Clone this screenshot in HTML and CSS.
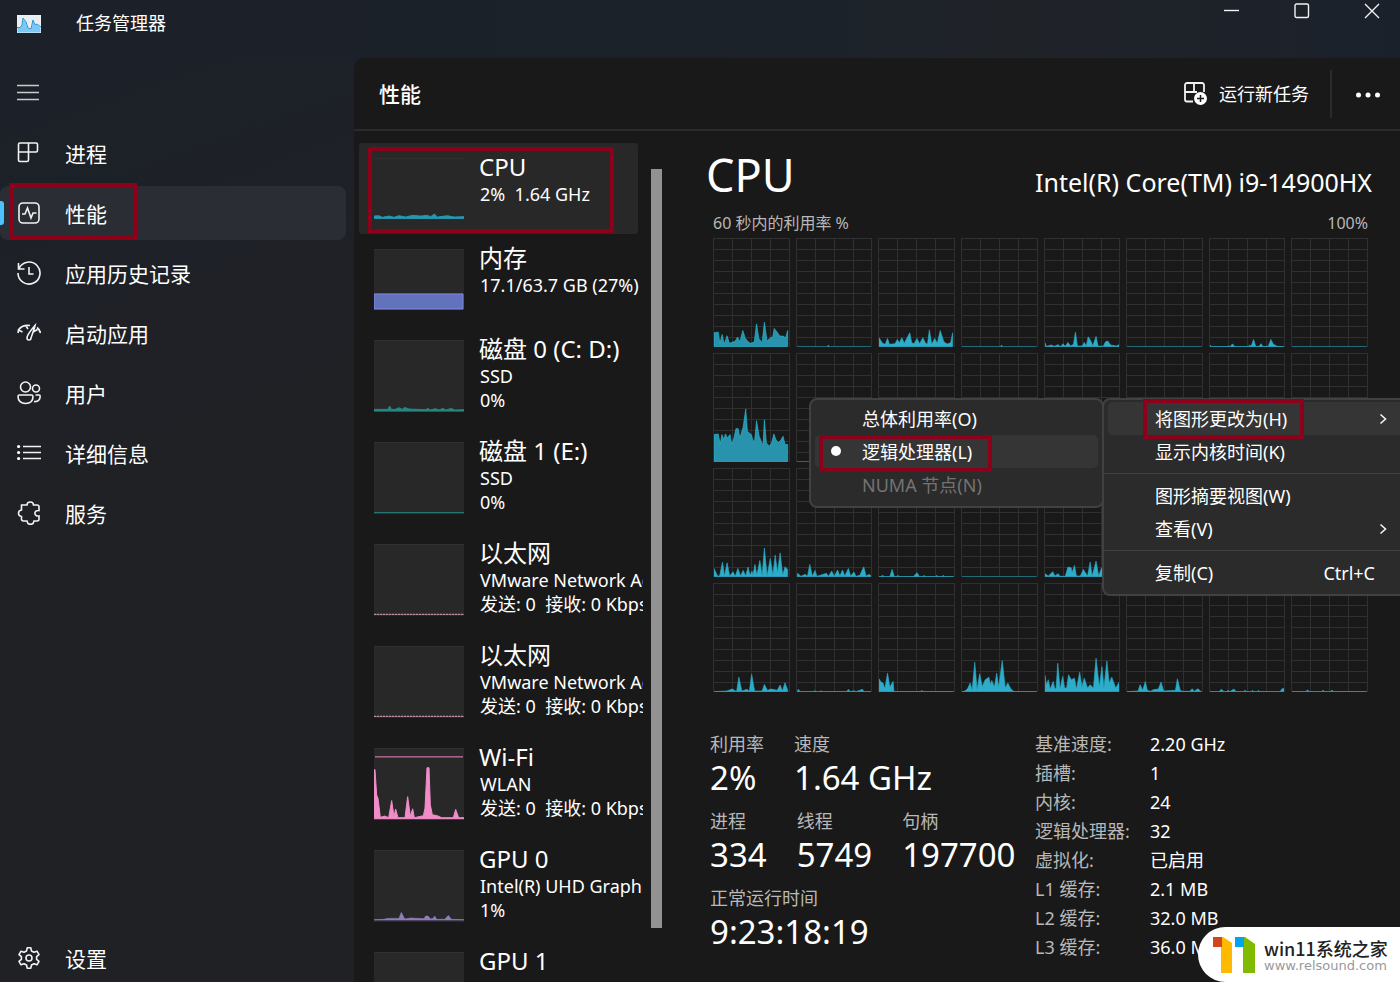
FILE: index.html
```html
<!DOCTYPE html>
<html lang="zh-CN">
<head>
<meta charset="utf-8">
<meta name="viewport" content="width=device-width, initial-scale=1">
<title>任务管理器</title>
<link rel="stylesheet" href="styles.css">
</head>
<body>
<div class="app">
  <header class="titlebar">
    <svg class="logo" width="24" height="18" viewBox="0 0 24 18"><rect width="24" height="18" fill="#e9eef3"/><path d="M0 12 3 12 5 10 6 3 9 7 11 13 14 14 16 5 18 10 20 9 24 12V18H0Z" fill="#7cc8f4"/><path d="M0 12.500H3L5 10 6 3 9 7 11 13 14 14 16 5 18 10 20 9 24 12" fill="none" stroke="#2492d8"/></svg>
    <h1 class="app-name">任务管理器</h1>
    <div class="window-buttons">
      <button aria-label="最小化"><svg width="16" height="16" viewBox="0 0 16 16"><path d="M0 7.500H15"/></svg></button>
      <button aria-label="最大化"><svg width="16" height="16" viewBox="0 0 16 16"><rect x="1" y="1" width="13.500" height="13.500" rx="1.500"/></svg></button>
      <button aria-label="关闭"><svg width="16" height="16" viewBox="0 0 16 16"><path d="M1 1 15 15M15 1 1 15"/></svg></button>
    </div>
  </header>

  <nav class="sidebar">
    <button class="hamburger" aria-label="导航"><svg width="24" height="24" viewBox="0 0 24 24"><path d="M0 5.500H22M0 12.500H22M0 19.500H22"/></svg></button>
    <a class="nav-item" href="#processes"><svg width="24" height="24" viewBox="0 0 24 24"><path d="M3 2H19a1.500 1.500 0 0 1 1.500 1.500V9.500a1.500 1.500 0 0 1-1.500 1.500H11.500V19a1.500 1.500 0 0 1-1.500 1.500H3A1.500 1.500 0 0 1 1.500 19V3.500A1.500 1.500 0 0 1 3 2ZM11.500 2V11H1.500"/></svg><span>进程</span></a>
    <a class="nav-item active" href="#performance" aria-current="page"><svg width="24" height="24" viewBox="0 0 24 24"><rect x="2" y="2" width="20" height="20" rx="4"/><path d="M5 13H8L10.500 7 14 17 16 12H19.500"/></svg><span>性能</span><i class="mark mark-nav"></i></a>
    <a class="nav-item" href="#history"><svg width="24" height="24" viewBox="0 0 24 24"><path d="M1.500 2V8H7.500M2 7.500A11 11 0 1 1 1 12M12 6V13H16.500"/></svg><span>应用历史记录</span></a>
    <a class="nav-item" href="#startup"><svg width="24" height="24" viewBox="0 0 24 24"><path d="M1 12 1.500 9 5.500 11M1.500 9C4 5 8 4 13 4.500M9 5 11 8M18 4.500C14 9 10 14 10 17a2 2 0 0 0 4 0C15 14 17 9 18 4.500ZM16 11 20.500 8.500M20 6.500C22 8 23 10 23.500 12"/></svg><span>启动应用</span></a>
    <a class="nav-item" href="#users"><svg width="24" height="24" viewBox="0 0 24 24"><circle cx="8.500" cy="6" r="5"/><circle cx="19" cy="7.500" r="3.500"/><path d="M2.500 14H14.500A1.500 1.500 0 0 1 16 15.500C16 20 13 22.500 8.500 22.500S1 20 1 15.500A1.500 1.500 0 0 1 2.500 14ZM18.500 14H22A1.300 1.300 0 0 1 23.200 15.300C23.200 19 21 21 17 20.500"/></svg><span>用户</span></a>
    <a class="nav-item" href="#details"><svg width="24" height="24" viewBox="0 0 24 24"><path d="M6 5.500H24M6 11.500H24M6 17.500H24"/><g class="solid"><circle cx="1.600" cy="5.500" r="1.600"/><circle cx="1.600" cy="11.500" r="1.600"/><circle cx="1.600" cy="17.500" r="1.600"/></g></svg><span>详细信息</span></a>
    <a class="nav-item" href="#services"><svg width="24" height="24" viewBox="0 0 24 24"><path d="M5 4H10C10 0 16.500 0 16.500 4H20A2 2 0 0 1 22 6V9.500C16.500 9 16.500 15.500 22 15V18A2 2 0 0 1 20 20H17C16.500 24.500 10.500 24.500 10 20H6.500A2 2 0 0 1 4.500 18V15.500C.500 15 .500 9.500 4.500 9V4Z"/></svg><span>服务</span></a>
    <a class="nav-item settings" href="#settings"><svg width="24" height="24" viewBox="0 0 24 24"><circle cx="12" cy="12" r="3"/><path d="M10.200 1.800H13.800L14.500 5 17 6.300 20 5.200 22 8.600 19.600 10.700V13.300L22 15.400 20 18.800 17 17.700 14.500 19 13.800 22.200H10.200L9.500 19 7 17.700 4 18.800 2 15.400 4.400 13.300V10.700L2 8.600 4 5.200 7 6.300 9.500 5Z" stroke-linejoin="round"/></svg><span>设置</span></a>
  </nav>

  <main class="main">
    <header class="page-header">
      <h2>性能</h2>
      <button class="run-task"><svg width="26" height="26" viewBox="0 0 26 26"><path d="M21 11V4A2 2 0 0 0 19 2H4A2 2 0 0 0 2 4V18.500A2 2 0 0 0 4 20.500H10M11 2V11M2 11H14"/><circle class="solid" cx="17.500" cy="17.500" r="6.500"/><path class="plus" d="M17.500 14V21M14 17.500H21"/></svg>运行新任务</button>
      <button class="more" aria-label="更多"><svg width="24" height="24" viewBox="0 0 24 24"><g class="solid"><circle cx="2.500" cy="13" r="2.500"/><circle cx="12" cy="13" r="2.500"/><circle cx="21.500" cy="13" r="2.500"/></g></svg></button>
    </header>

    <div class="content">
      <section class="devices" aria-label="设备">
        <div class="device-list">
          <a class="device short selected" href="#cpu">
            <svg class="thumb cpu" viewBox="0 0 270 183" preserveAspectRatio="none"><path d="M0 182V174L15 173 25 178 45 174 60 178 75 173 95 177 115 172 140 174 160 172 170 176 181 168 190 177 220 173 240 177 270 176V182Z"/></svg>
            <span class="device-text"><strong>CPU</strong><span>2%&nbsp; 1.64 GHz</span></span>
            <i class="mark mark-device"></i>
          </a>
          <a class="device short" href="#memory">
            <svg class="thumb memory" viewBox="0 0 270 183" preserveAspectRatio="none"><path d="M0 180V134H267V180Z"/></svg>
            <span class="device-text"><strong>内存</strong><span>17.1/63.7 GB (27%)</span></span>
          </a>
          <a class="device" href="#disk0">
            <svg class="thumb disk" viewBox="0 0 270 216" preserveAspectRatio="none"><path d="M0 213V208H42L47 198 52 208 64 208 75 203 85 208 92 202 105 207 155 209 162 205 168 210 185 206 195 210 207 205 215 210 232 205 242 210 270 209V213Z"/></svg>
            <span class="device-text"><strong>磁盘 0 (C: D:)</strong><span>SSD</span><span>0%</span></span>
          </a>
          <a class="device" href="#disk1">
            <svg class="thumb disk" viewBox="0 0 270 216" preserveAspectRatio="none"><path d="M0 212H270"/></svg>
            <span class="device-text"><strong>磁盘 1 (E:)</strong><span>SSD</span><span>0%</span></span>
          </a>
          <a class="device" href="#eth0">
            <svg class="thumb net" viewBox="0 0 270 216" preserveAspectRatio="none"><path class="faint" d="M0 211H270"/><path class="dashes" d="M0 211H270"/></svg>
            <span class="device-text"><strong>以太网</strong><span>VMware Network Adapter</span><span>发送: 0&nbsp; 接收: 0 Kbps</span></span>
          </a>
          <a class="device" href="#eth1">
            <svg class="thumb net" viewBox="0 0 270 216" preserveAspectRatio="none"><path class="faint" d="M0 211H270"/><path class="dashes" d="M0 211H270"/></svg>
            <span class="device-text"><strong>以太网</strong><span>VMware Network Adapter</span><span>发送: 0&nbsp; 接收: 0 Kbps</span></span>
          </a>
          <a class="device" href="#wifi">
            <svg class="thumb net" viewBox="0 0 270 216" preserveAspectRatio="none"><path d="M3 24H267"/><path class="area" d="M0 210V63H3L8 140 12 150 19 208 32 204 44 209 53 157 60 205 65 183 72 209 93 209 101 145 109 204 116 182 121 209 148 203 153 180 159 57H165L169 170 175 200 190 203 203 209 238 209 245 184 254 209 270 209V212H0Z"/></svg>
            <span class="device-text"><strong>Wi-Fi</strong><span>WLAN</span><span>发送: 0&nbsp; 接收: 0 Kbps</span></span>
          </a>
          <a class="device" href="#gpu0">
            <svg class="thumb gpu" viewBox="0 0 270 216" preserveAspectRatio="none"><path d="M0 209 30 208 40 205H75L82 187 92 207 110 204 150 206 155 198H162L170 207 177 205 182 198 188 208H212L223 196 232 208 270 209V210H0Z"/></svg>
            <span class="device-text"><strong>GPU 0</strong><span>Intel(R) UHD Graphics</span><span>1%</span></span>
          </a>
          <a class="device" href="#gpu1">
            <svg class="thumb gpu" viewBox="0 0 270 216" preserveAspectRatio="none"><path d="M0 210H270"/></svg>
            <span class="device-text"><strong>GPU 1</strong><span>NVIDIA GeForce RTX</span><span>0%</span></span>
          </a>
        </div>
        <div class="scroll-track"><div class="scroll-thumb"></div></div>
      </section>

      <section class="detail" id="cpu">
        <div class="detail-head"><h2>CPU</h2><span class="model">Intel(R) Core(TM) i9-14900HX</span></div>
        <div class="axis"><span>60 秒内的利用率 %</span><span>100%</span></div>
        <div class="cores">
          <svg class="core" viewBox="0 0 228 327" preserveAspectRatio="none"><path class="busy" d="M0 326V284L13 282 18 316 25 289 31 319 40 293 47 316 65 309 72 297 79 312 88 277 95 299 102 309 111 316 123 312 130 257 137 301 147 314 154 252 162 309 175 297 179 299 184 271 193 282 201 294 211 294 219 299 225 277V326Z"/></svg>
          <svg class="core" viewBox="0 0 228 327" preserveAspectRatio="none"><path d="M0 326H93L96 321 99 326H228"/></svg>
          <svg class="core" viewBox="0 0 228 327" preserveAspectRatio="none"><path d="M0 326V299L11 316 19 319 26 301 32 319 49 317 56 304 62 314 70 299 77 316 86 299 94 284 100 314 107 317 116 301 124 317 134 299 142 315 148 319 154 275 161 319 170 301 178 316 187 277 198 311 208 318 219 314 225 284V326Z"/></svg>
          <svg class="core" viewBox="0 0 228 327" preserveAspectRatio="none"><path d="M0 326H118L121 321 124 326H228"/></svg>
          <svg class="core" viewBox="0 0 228 327" preserveAspectRatio="none"><path d="M0 326V314L4 325 20 321 28 325 40 320 48 326 55 317 62 325 70 313 78 324 87 319 93 282 99 324 114 324 120 313 126 324 132 296 140 309 146 324 156 295 162 324 178 325 185 311 192 309 200 321 218 324 228 319V326Z"/></svg>
          <svg class="core" viewBox="0 0 228 327" preserveAspectRatio="none"><path d="M0 326H228"/></svg>
          <svg class="core" viewBox="0 0 228 327" preserveAspectRatio="none"><path d="M0 326V321L4 326H50L55 324 60 326 69 318 76 326H118L121 321 126 325 133 304 140 326 150 325 156 317 162 326 178 325 186 304 193 318 205 325 228 326Z"/></svg>
          <svg class="core" viewBox="0 0 228 327" preserveAspectRatio="none"><path d="M0 326H228"/></svg>

          <svg class="core" viewBox="0 0 228 327" preserveAspectRatio="none"><path class="busy" d="M0 326V244L13 242 19 274 24 244 30 259 35 242 41 254 49 244 54 274 61 254 67 226 74 226 79 254 89 222 97 167 102 234 108 239 114 244 119 262 124 264 130 202 138 249 146 269 150 274 154 199 160 269 169 279 176 269 183 242 189 259 197 269 205 259 211 249 217 274 225 274V326Z"/></svg>
          <svg class="core" viewBox="0 0 228 327" preserveAspectRatio="none"><path d="M0 326H228"/></svg>
          <svg class="core" viewBox="0 0 228 327" preserveAspectRatio="none"><path d="M0 326H228"/></svg>
          <svg class="core" viewBox="0 0 228 327" preserveAspectRatio="none"><path d="M0 326H228"/></svg>
          <svg class="core" viewBox="0 0 228 327" preserveAspectRatio="none"><path d="M0 326H228"/></svg>
          <svg class="core" viewBox="0 0 228 327" preserveAspectRatio="none"><path d="M0 326H228"/></svg>
          <svg class="core" viewBox="0 0 228 327" preserveAspectRatio="none"><path d="M0 326H228"/></svg>
          <svg class="core" viewBox="0 0 228 327" preserveAspectRatio="none"><path d="M0 326H228"/></svg>

          <svg class="core" viewBox="0 0 228 327" preserveAspectRatio="none"><path d="M0 326V301L11 324 17 324 26 282 32 324 40 284 48 324 58 311 65 325 73 301 81 324 89 307 97 324 104 297 110 322 116 309 119 322 125 289 131 322 140 277 147 324 154 239 162 324 172 271 180 322 187 261 194 314 202 254 210 322 217 296 225 304V326Z"/></svg>
          <svg class="core" viewBox="0 0 228 327" preserveAspectRatio="none"><path d="M0 326 2 316 12 325 25 319 32 325 39 289 47 325 55 307 61 325 90 316 96 325 106 309 114 325 124 306 131 324 139 306 146 324 157 301 164 324 174 312 180 325 192 322 204 296 211 324 221 319 227 325V326Z"/></svg>
          <svg class="core" viewBox="0 0 228 327" preserveAspectRatio="none"><path d="M0 326H6L11 322 16 326H33L40 304 47 326H54L58 322 62 326H105L116 314 124 326H134L138 322 142 326H172L176 322 180 326H192L196 322 200 326H228Z"/></svg>
          <svg class="core" viewBox="0 0 228 327" preserveAspectRatio="none"><path d="M0 326H228"/></svg>
          <svg class="core" viewBox="0 0 228 327" preserveAspectRatio="none"><path d="M0 326V317L10 324 24 311 30 324 40 317 46 325 62 325 70 297 80 299 83 314 90 292 96 324 108 324 117 304 130 324 138 282 144 324 156 279 164 324 173 299 180 324 228 326Z"/></svg>
          <svg class="core" viewBox="0 0 228 327" preserveAspectRatio="none"><path d="M0 326H228"/></svg>
          <svg class="core" viewBox="0 0 228 327" preserveAspectRatio="none"><path d="M0 326H228"/></svg>
          <svg class="core" viewBox="0 0 228 327" preserveAspectRatio="none"><path d="M0 326H228"/></svg>

          <svg class="core" viewBox="0 0 228 327" preserveAspectRatio="none"><path d="M0 326 39 324 56 318 69 326 76 282 85 324 101 319 108 325 115 273 124 324 147 324 154 304 163 322 175 318 193 322 202 306 209 324 217 299 225 322V326Z"/></svg>
          <svg class="core" viewBox="0 0 228 327" preserveAspectRatio="none"><path d="M0 326 4 319 10 326H50L54 323 58 326H70L74 323 78 326H151L157 319 163 326 174 323 180 326 200 319 205 326H228Z"/></svg>
          <svg class="core" viewBox="0 0 228 327" preserveAspectRatio="none"><path d="M0 326V287L6 297 12 300 18 317 26 270 33 312 43 295 46 326H128L131 322 134 326H228Z"/></svg>
          <svg class="core" viewBox="0 0 228 327" preserveAspectRatio="none"><path d="M0 326 9 324 17 317 25 300 31 322 39 237 46 320 54 272 62 310 71 290 82 282 87 304 91 292 99 312 106 270 112 312 123 232 132 314 140 300 149 317 159 326H228Z"/></svg>
          <svg class="core" viewBox="0 0 228 327" preserveAspectRatio="none"><path d="M0 326V277L4 305 10 290 16 318 25 295 30 318 34 315 39 240 46 318 54 280 60 315 66 315 72 275 80 290 90 285 96 318 106 267 113 312 120 285 130 315 138 305 148 315 156 225 166 312 174 250 180 315 189 233 196 300 204 282 216 315 227 297V326Z"/></svg>
          <svg class="core" viewBox="0 0 228 327" preserveAspectRatio="none"><path d="M0 326 34 324 40 305 48 322 56 295 62 322 72 325 80 320 96 318 104 297 112 324 148 322 154 287 162 320 168 325 192 325 199 317 205 325 217 317 225 325 228 326Z"/></svg>
          <svg class="core" viewBox="0 0 228 327" preserveAspectRatio="none"><path d="M0 326H27L35 319 43 326H50L55 322 60 326 73 318 80 326H102L107 322 112 326H126L130 322 134 326H144L148 322 152 326H214L220 317H226V326Z"/></svg>
          <svg class="core" viewBox="0 0 228 327" preserveAspectRatio="none"><path d="M0 326H41L47 321 54 326H92L95 321 99 326H117L122 321 127 326H228Z"/></svg>
        </div>

        <div class="stats">
          <div class="stat-rows">
            <div class="stat-row">
              <dl><dt>利用率</dt><dd>2%</dd></dl>
              <dl><dt>速度</dt><dd>1.64 GHz</dd></dl>
            </div>
            <div class="stat-row">
              <dl><dt>进程</dt><dd>334</dd></dl>
              <dl><dt>线程</dt><dd>5749</dd></dl>
              <dl><dt>句柄</dt><dd>197700</dd></dl>
            </div>
            <div class="stat-row">
              <dl><dt>正常运行时间</dt><dd>9:23:18:19</dd></dl>
            </div>
          </div>
          <table class="specs">
            <tr><th scope="row">基准速度:</th><td>2.20 GHz</td></tr>
            <tr><th scope="row">插槽:</th><td>1</td></tr>
            <tr><th scope="row">内核:</th><td>24</td></tr>
            <tr><th scope="row">逻辑处理器:</th><td>32</td></tr>
            <tr><th scope="row">虚拟化:</th><td>已启用</td></tr>
            <tr><th scope="row">L1 缓存:</th><td>2.1 MB</td></tr>
            <tr><th scope="row">L2 缓存:</th><td>32.0 MB</td></tr>
            <tr><th scope="row">L3 缓存:</th><td>36.0 MB</td></tr>
          </table>
        </div>
      </section>
    </div>
  </main>

  <div class="menu menu-main" role="menu">
    <button class="menu-item hover" role="menuitem">将图形更改为(H)<svg class="chevron" width="8" height="12" viewBox="0 0 8 12"><path d="M1.500 1.500 6.500 6 1.500 10.500"/></svg><i class="mark mark-change"></i></button>
    <button class="menu-item" role="menuitem">显示内核时间(K)</button>
    <hr>
    <button class="menu-item" role="menuitem">图形摘要视图(W)</button>
    <button class="menu-item" role="menuitem">查看(V)<svg class="chevron" width="8" height="12" viewBox="0 0 8 12"><path d="M1.500 1.500 6.500 6 1.500 10.500"/></svg></button>
    <hr>
    <button class="menu-item" role="menuitem">复制(C)<span class="shortcut">Ctrl+C</span></button>
  </div>
  <div class="menu menu-sub" role="menu">
    <button class="menu-item" role="menuitemradio" aria-checked="false">总体利用率(O)</button>
    <button class="menu-item hover checked" role="menuitemradio" aria-checked="true">逻辑处理器(L)<i class="mark mark-logical"></i></button>
    <button class="menu-item" role="menuitemradio" aria-checked="false" disabled>NUMA 节点(N)</button>
  </div>

  <div class="site-badge">
    <svg width="42" height="36" viewBox="0 0 42 36"><path fill="#ffb900" d="M8 0H10L19 6V36H8Z"/><path fill="#d2451e" d="M0 0H9V10H0Z"/><path fill="#80ba01" d="M30 0H32L42 7V36H30Z"/><path fill="#02a4ef" d="M22 0H31V10H22Z"/></svg>
    <div><div class="site-name">win11系统之家</div><div class="site-url">www.relsound.com</div></div>
  </div>
</div>
</body>
</html>
```
FILE: styles.css
```css
* { box-sizing: border-box; }

body {
  margin: 0;
  background: #191919;
  color: #fff;
  font: 18px/24px "Noto Sans", "Noto Sans CJK SC", sans-serif;
}

button {
  margin: 0;
  padding: 0;
  border: 0;
  background: none;
  color: inherit;
  font: inherit;
}

a { color: inherit; text-decoration: none; }
h1, h2, dl, dd { margin: 0; font-weight: 400; }

svg { display: block; flex: none; fill: none; stroke: #f2f2f2; stroke-width: 1.600; }
.solid { fill: #fff; stroke: none; }

.app {
  position: relative;
  display: grid;
  grid-template: 58px minmax(0, 1fr) / 354px minmax(0, 1fr);
  height: 100vh;
  overflow: hidden;
  background: linear-gradient(160deg, #1b2029 0%, #202124 40%, #202124 70%, #1d2129 100%);
}

/* Title bar */
.titlebar {
  grid-column: 1 / -1;
  display: flex;
  align-items: flex-start;
  padding: 0 20px 0 17px;
  background: linear-gradient(90deg, #1b2029, #1c2229 60%, #1f2328 72%, #1b212b);
}
.logo { margin-top: 15px; stroke-width: 1; }
.app-name { margin-left: 35px; margin-top: 11px; font-size: 18px; line-height: 24px; }
.window-buttons { display: flex; gap: 54px; margin-left: auto; padding-top: 3px; }
.window-buttons svg { stroke-width: 1.400; }

/* Sidebar */
.sidebar { display: flex; flex-direction: column; gap: 6px; padding-right: 8px; }
.hamburger { display: flex; align-items: center; height: 62px; padding: 5px 0 0 17px; }
.hamburger svg { stroke: #c8cacd; stroke-width: 1.400; }
.nav-item {
  position: relative;
  display: flex;
  align-items: center;
  gap: 24px;
  height: 54px;
  padding-left: 17px;
  border-radius: 8px;
  font-size: 21px;
}
.nav-item span { padding-top: 2px; }
.nav-item.active { background: #2a2e34; }
.nav-item.active::before {
  content: "";
  position: absolute;
  left: 0;
  top: 15px;
  width: 4px;
  height: 24px;
  border-radius: 0 3px 3px 0;
  background: #4cc2ff;
}
.settings { height: 48px; margin-top: auto; }

/* Highlight frames */
.mark { position: absolute; border: 4px solid #8c0019; pointer-events: none; }
.mark-nav { left: 9px; top: -3px; width: 128px; height: 57px; }
.mark-device { left: 9px; top: 4px; width: 246px; height: 86px; }
.mark-change { left: 35px; top: -3px; width: 161px; height: 40px; }
.mark-logical { left: 4px; top: 0; width: 173px; height: 37px; }

/* Main panel */
.main {
  display: flex;
  flex-direction: column;
  min-height: 0;
  border-top-left-radius: 10px;
  background: #191919;
}
.page-header {
  display: flex;
  flex: none;
  align-items: center;
  height: 73px;
  padding: 0 20px 0 25px;
  border-bottom: 2px solid #2b2b2b;
}
.page-header h2 { font-size: 21px; font-weight: 500; }
.run-task { display: flex; align-items: center; gap: 10px; margin-left: auto; }
.run-task svg { stroke-width: 1.800; }
.run-task .plus { stroke: #191919; stroke-width: 1.500; }
.more { margin-left: 21px; padding: 12px 0 12px 24px; border-left: 2px solid #2b2b2b; }

.content { display: flex; flex: 1; min-height: 0; }

/* Device list */
.devices { display: flex; flex: none; width: 310px; padding: 12px 0 0 5px; }
.device-list { width: 284px; overflow: hidden; }
.device { position: relative; display: flex; gap: 15px; height: 102px; padding: 15px; margin-right: 5px; }
.device.short { height: 91px; }
.device.selected { background: #282828; border-radius: 3px; }
.thumb { width: 90px; height: 72px; background: #282828; border-top: 1px solid #303030; stroke-width: 3; }
.short .thumb { height: 61px; }
.cpu { fill: #2597ae; stroke: #2597ae; }
.memory { fill: #6373bb; stroke: #8587ef; }
.disk { fill: #258780; stroke: #258780; }
.net { stroke: #ee88c4; }
.faint { stroke: #83596f; }
.dashes { stroke: #c99bb2; stroke-dasharray: 6 3; }
.area { fill: #f08cc8; stroke: #f08cc8; }
.gpu { fill: #8f7dbf; stroke: #8f7dbf; stroke-width: 2; }
.device-text { display: flex; flex-direction: column; margin-top: -6px; white-space: nowrap; }
.device-text > span { padding-left: 1px; }
.device-text strong { font-size: 24px; font-weight: 400; line-height: 30px; }
.scroll-track { width: 11px; margin-left: 8px; padding: 26px 0 54px; }
.scroll-thumb { height: 100%; background: #929292; }

/* Detail pane */
.detail { flex: 1; min-width: 0; padding: 20px 28px 0 42px; }
.detail-head { display: flex; align-items: baseline; justify-content: space-between; }
.detail-head h2 { font-size: 45px; line-height: 48px; }
.model { font-size: 25px; line-height: 30px; }
.axis { display: flex; justify-content: space-between; padding: 12px 4px 0 7px; color: #b8b8b8; font-size: 16px; }
.cores {
  display: grid;
  grid-template-columns: repeat(8, minmax(0, 1fr));
  gap: 6px;
  padding: 3px 4px 0 7px;
}
.core {
  width: 100%;
  height: 109px;
  border: 1px solid #303030;
  border-bottom: 0;
  background:
    repeating-linear-gradient(to right, transparent 0 18px, #303030 18px 19px),
    repeating-linear-gradient(to bottom, transparent 0 10px, #303030 10px 11px);
  fill: #2badcb;
  stroke: #2aa9c2;
  stroke-width: 2;
}
.busy { fill: #2992ad; stroke: #28b8d0; }
.stats { display: flex; padding: 40px 0 0 4px; }
.stat-rows { display: flex; flex-direction: column; flex: 0 0 325px; gap: 9px; }
.stat-row { display: flex; gap: 30px; }
.stat-row dt { color: #b8b8b8; }
.stat-row dd { font-size: 33px; line-height: 44px; }
.specs { align-self: flex-start; border-collapse: collapse; }
.specs th, .specs td { padding: 0 0 5px; font-weight: 400; text-align: left; line-height: 24px; }
.specs th { width: 115px; color: #b8b8b8; }

/* Context menus */
.menu { position: absolute; top: 398px; padding: 2px 4px 5px; border: 2px solid #414141; border-radius: 8px; background: #2b2b2b; }
.menu-main { right: -10px; width: 308px; }
.menu-sub { right: 296px; width: 295px; }
.menu-item {
  position: relative;
  display: flex;
  align-items: center;
  width: 100%;
  height: 33px;
  padding: 0 17px 0 47px;
  border-radius: 5px;
  text-align: left;
}
.menu-item.hover { background: #353535; }
.menu-item:disabled { color: #737373; }
.menu-item.checked::before {
  content: "";
  position: absolute;
  left: 16px;
  top: 11px;
  width: 10px;
  height: 10px;
  border-radius: 50%;
  background: #fff;
}
.chevron, .shortcut { margin-left: auto; }
.shortcut { padding-right: 12px; }
.menu hr { height: 1px; margin: 5px -4px; border: 0; background: #414141; }

/* Site badge */
.site-badge {
  position: absolute;
  right: 0;
  bottom: 0;
  display: flex;
  gap: 9px;
  align-items: center;
  width: 202px;
  height: 55px;
  padding-left: 15px;
  border-radius: 28px 0 0 28px;
  background: #fff;
}
.site-badge svg { stroke: none; }
.site-name { color: #222; font: 500 18px/22px "Noto Sans CJK SC", sans-serif; white-space: nowrap; }
.site-url { color: #999; font: 13px/14px "DejaVu Sans", sans-serif; }
```
